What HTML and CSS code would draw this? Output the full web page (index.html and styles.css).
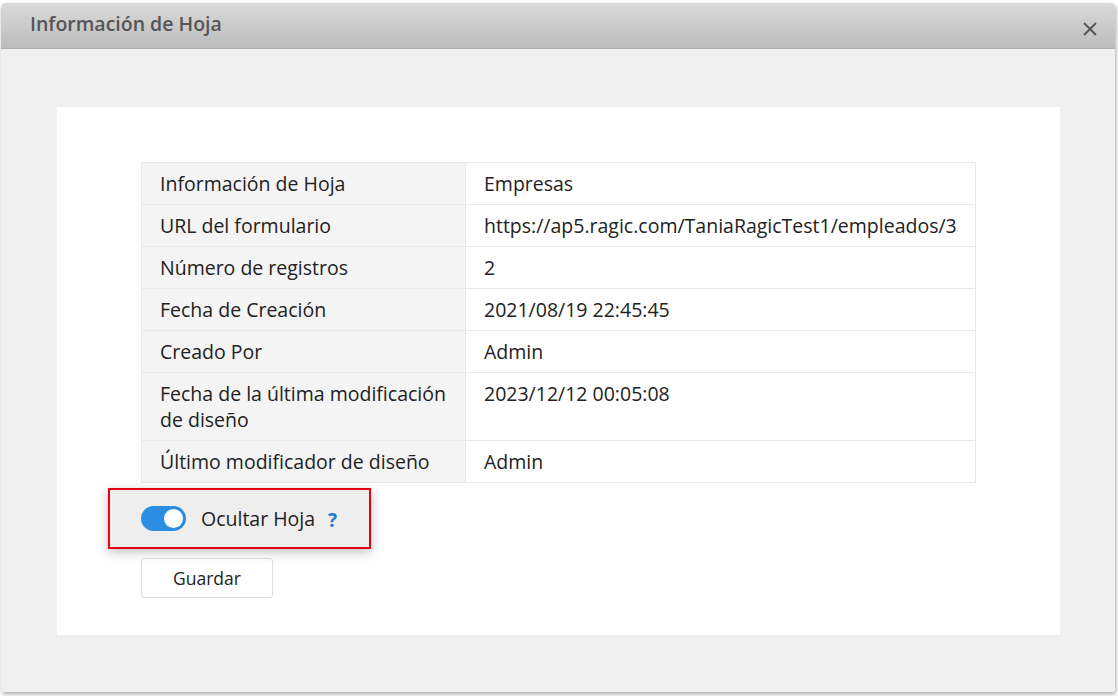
FILE: index.html
```html
<!DOCTYPE html>
<html lang="es">
<head>
<meta charset="utf-8">
<title>Información de Hoja</title>
<link rel="stylesheet" href="styles.css">
</head>
<body>
<div class="dialog">
  <div class="dialog-header">
    <span class="dialog-title">Información de Hoja</span>
    <span class="close" aria-label="Cerrar">
      <svg width="16" height="16" viewBox="0 0 16 16"><path d="M2 2 L14 14 M14 2 L2 14" stroke="#555" stroke-width="1.8" fill="none"/></svg>
    </span>
  </div>
  <div class="dialog-body">
    <div class="panel">
      <table class="info">
        <tr><th>Información de Hoja</th><td>Empresas</td></tr>
        <tr><th>URL del formulario</th><td>https://ap5.ragic.com/TaniaRagicTest1/empleados/3</td></tr>
        <tr><th>Número de registros</th><td>2</td></tr>
        <tr><th>Fecha de Creación</th><td>2021/08/19 22:45:45</td></tr>
        <tr><th>Creado Por</th><td>Admin</td></tr>
        <tr><th>Fecha de la última modificación de diseño</th><td>2023/12/12 00:05:08</td></tr>
        <tr><th>Último modificador de diseño</th><td>Admin</td></tr>
      </table>
      <div class="toggle-row">
        <span class="switch"><span class="knob"></span></span>
        <span class="toggle-label">Ocultar Hoja</span>
        <span class="help">?</span>
      </div>
      <button class="btn">Guardar</button>
    </div>
  </div>
</div>
</body>
</html>
```
FILE: styles.css
```css
html, body {
  margin: 0;
  padding: 0;
  background: #ffffff;
  font-family: "Open Sans", "Liberation Sans", sans-serif;
}
body {
  padding: 3px 3px 4px 1px;
  box-sizing: border-box;
  height: 696px;
}
.dialog {
  height: 689px;
  display: flex;
  flex-direction: column;
  border-radius: 5px 5px 3px 3px;
  overflow: hidden;
  box-shadow: 1px 2px 4px rgba(0,0,0,0.35);
  background: #f0f0f0;
}
.dialog-header {
  height: 46px;
  flex: none;
  display: flex;
  align-items: center;
  justify-content: space-between;
  padding: 0 17px 0 29px;
  background: linear-gradient(#dadada, #bcbcbc);
  border-bottom: 1px solid #b0b0b0;
  box-sizing: border-box;
}
.dialog-title {
  color: #555;
  font-size: 19.5px;
  font-weight: 600;
  margin-top: -4px;
}
.close {
  display: flex;
  margin-top: 6px;
}
.dialog-body {
  flex: 1;
  padding: 58px 55px 57px 56px;
  background: #f0f0f0;
  display: flex;
}
.panel {
  flex: 1;
  background: #ffffff;
  padding: 55px 84px 0 84px;
}
.info {
  width: 100%;
  border-collapse: collapse;
  font-size: 19.5px;
  color: #222;
}
.info th, .info td {
  border: 1px solid #e8e8e8;
  padding: 8px 18px 7px 18px;
  line-height: 26px;
  text-align: left;
  vertical-align: top;
  font-weight: normal;
}
.info th {
  width: 287px;
  background: #f4f4f4;
}
.toggle-row {
  display: inline-flex;
  align-items: center;
  margin: 5px 0 0 -33px;
  padding: 0 32px 0 31px;
  height: 57px;
  border: 2px solid #e60012;
  background: #eeeeee;
  box-shadow: 0 3px 10px rgba(0,0,0,0.25);
}
.switch {
  width: 45px;
  height: 25px;
  border-radius: 13px;
  background: #2b8ee2;
  position: relative;
  flex: none;
}
.knob {
  position: absolute;
  right: 3px;
  top: 3px;
  width: 19px;
  height: 19px;
  border-radius: 50%;
  background: #fff;
}
.toggle-label {
  margin-left: 15px;
  font-size: 19.5px;
  color: #222;
}
.help {
  margin-left: 13px;
  color: #1e7cc8;
  font-weight: 700;
  font-size: 19px;
  margin-top: 3px;
}
.btn {
  display: block;
  margin-top: 9px;
  width: 132px;
  height: 40px;
  background: #fff;
  border: 1px solid #dcdcdc;
  border-radius: 3px;
  font-family: "Open Sans", "Liberation Sans", sans-serif;
  font-size: 17.5px;
  color: #222;
}
```
